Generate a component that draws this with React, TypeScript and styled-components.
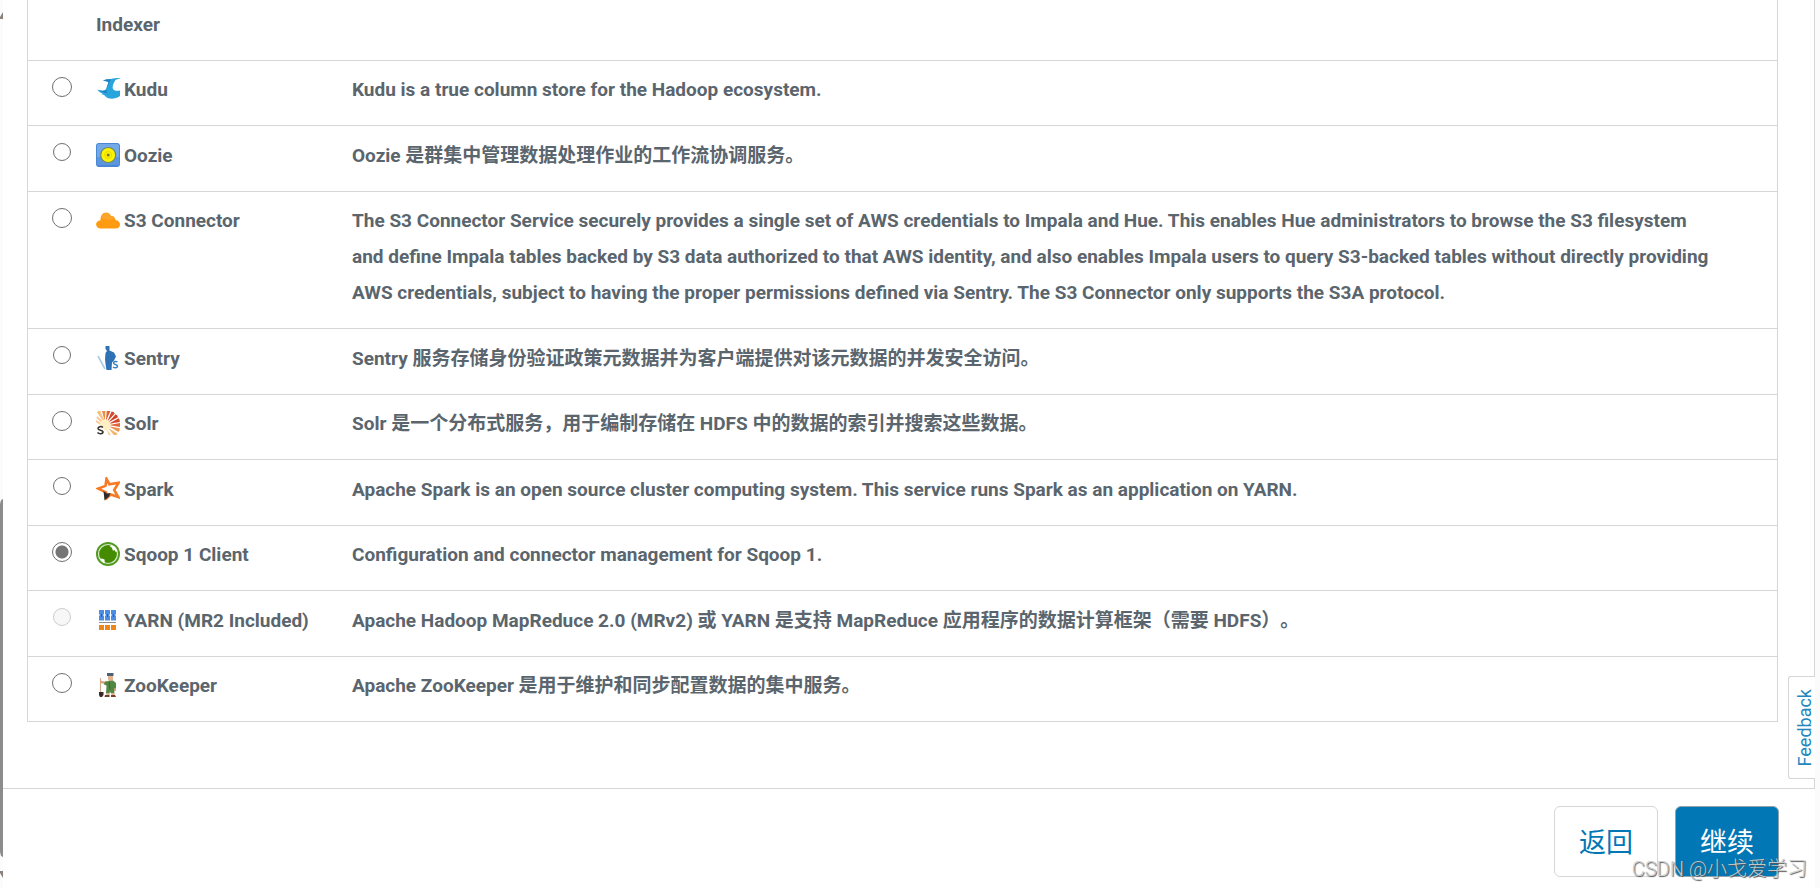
import React, { useState } from 'react';
import styled, { createGlobalStyle } from 'styled-components';

const BORDER = '#d4d6d9';
const BLUE = '#0277b5';

const GlobalStyle = createGlobalStyle`
  *, *::before, *::after { box-sizing: border-box; }
  body {
    margin: 0;
    background: #fff;
    color: #5a656d;
    font-family: Roboto, 'Noto Sans CJK SC', sans-serif;
    font-size: 19px;
    line-height: 36px;
    text-spacing-trim: space-all;
  }
`;

const Page = styled.div`
  display: grid;
  grid-template-columns: 3px 1fr 5px;
  min-height: 100vh;
  overflow: hidden;
`;

const Rail = styled.div`
  display: flex;
  flex-direction: column;
  justify-content: space-between;
  padding: 12px 0 10px;
  overflow: hidden;
  background: #fbfbfb;
`;

const RailThumb = styled.div`
  height: 358px;
  margin: auto 0 14px;
  border-radius: 3px 0 0 3px / 6px 0 0 6px;
  background: #8c8c8c;
`;

const RailArrow = styled.svg`
  display: block;
  width: 3px;
  height: 7px;
  fill: #8a807c;
`;

const Gutter = styled.div`
  background: #fbfbfb;
`;

const Main = styled.main`
  display: flex;
  flex-direction: column;
  min-width: 0;
`;

const Content = styled.section`
  position: relative;
  flex: 1;
  padding: 0 36px 66px 24px;
  border-right: 1px solid ${BORDER};
`;

const ServiceTable = styled.table`
  width: 100%;
  table-layout: fixed;
  border: 1px solid ${BORDER};
  border-top: 0;
  border-spacing: 0;
  font-weight: 700;
`;

const RadioCol = styled.col`
  width: 68px;
`;

const NameCol = styled.col`
  width: 256px;
`;

const Cell = styled.td`
  padding: 11px 0 17px;
  border-bottom: 1px solid ${BORDER};
  text-align: left;
  vertical-align: top;
`;

const DescriptionCell = styled(Cell)`
  padding-right: 60px;
`;

const Radio = styled.input`
  appearance: none;
  display: block;
  width: 20px;
  height: 20px;
  margin: 5px 0 0 24px;
  border: 1px solid #6f6f6f;
  border-radius: 50%;
  background: #fff;

  &:checked {
    background: radial-gradient(circle, #757575 0 6px, #fff 7px);
  }

  &:disabled {
    border-color: #cdcdcd;
    background: #f7f7f7;
  }
`;

const Row = styled.tr`
  &:first-child ${Cell} { padding-top: 7px; }
  &:not(:first-child):nth-child(odd) ${Cell} { padding-top: 12px; }
  &:nth-child(odd) ${Radio} { width: 18px; height: 18px; margin-left: 25px; }
  &:last-child ${Cell} { border-bottom: 0; }
`;

const ServiceLabel = styled.label`
  display: flex;
  align-items: flex-start;
  gap: 4px;
  white-space: nowrap;
`;

const ServiceIcon = styled.svg`
  flex: none;
  width: 24px;
  height: 24px;
  margin-top: 5px;
`;

const Feedback = styled.button`
  position: absolute;
  right: -1px;
  bottom: 9px;
  width: 27px;
  height: 103px;
  padding: 0 0 0 6px;
  border: 1px solid ${BORDER};
  border-right: 0;
  border-radius: 3px 0 0 3px;
  background: #fff;
  color: #2288bd;
  font: 400 18px/20px Roboto, sans-serif;
`;

const FeedbackText = styled.span`
  display: block;
  margin: auto;
  writing-mode: vertical-rl;
  transform: rotate(180deg);
`;

const Footer = styled.footer`
  position: relative;
  display: flex;
  justify-content: flex-end;
  gap: 17px;
  padding: 17px 36px 11px;
  border-top: 1px solid ${BORDER};
`;

const ActionButton = styled.button<{ $primary?: boolean }>`
  width: 104px;
  height: 71px;
  padding: 2px 0 0;
  border: 1px solid ${p => (p.$primary ? '#8fa3ad' : BORDER)};
  border-radius: 6px;
  background: ${p => (p.$primary ? BLUE : '#fff')};
  color: ${p => (p.$primary ? '#fff' : BLUE)};
  font: 400 27px/36px Roboto, 'Noto Sans CJK SC', sans-serif;
`;

const Watermark = styled.span`
  position: absolute;
  right: 8px;
  bottom: 4px;
  color: rgba(205, 205, 205, 0.95);
  font: 300 20px/30px Roboto, 'Noto Sans CJK SC', sans-serif;
  text-shadow: 1px 1px 1px #555;
  pointer-events: none;
`;

const KuduIcon = () => (
  <ServiceIcon viewBox="0 0 24 24" aria-hidden="true">
    <path d="M24 1c-4 0-7 .2-9 1-2 .3-5 0-8 1.500 2 .2 4 .8 5.500 1.500L10 12c-1.500 2-5 2-9 .5 2 2 3 3 5.500 4l-1 1c2 0 3 .5 4 2 4 3.500 10 2.500 14.500-.5v-5.500c-2 .5-6 .5-7-1.500-1-2.500 1-7 2.500-9 1-.8 3-1 4.500-1.500z" fill="#29a5de" />
    <path d="M15 2l-4 9c-.5 2-1 4 .5 6-1.500-1.500-6-2-9.500-3.500 4 .5 7 1 8.500-1l2-7.500L7 3.500C10 2 13 2.300 15 2z" fill="#2280bf" />
  </ServiceIcon>
);

const OozieIcon = () => (
  <ServiceIcon viewBox="0 0 24 24" aria-hidden="true">
    <rect width="24" height="24" rx="3" fill="#4b88d3" />
    <rect x="1" y="1" width="22" height="21" rx="2" fill="#73a9e8" />
    <path d="M1 14h22v6a2 2 0 0 1-2 2H3a2 2 0 0 1-2-2z" fill="#5c96df" />
    <circle cx="12.200" cy="12" r="7.500" fill="#fff200" stroke="#6b8a62" strokeWidth="1.200" />
    <circle cx="12.200" cy="12" r="3.500" fill="none" stroke="#e3d900" />
    <circle cx="12.200" cy="12" r="1.500" fill="#77772a" />
  </ServiceIcon>
);

const S3Icon = () => (
  <ServiceIcon viewBox="0 0 24 24" aria-hidden="true">
    <path d="M4 20.500A4 4 0 0 1 1.500 13.500c.8-.8 2-1 3-1.200C4.300 7.500 7 4.500 10 4.500c2.500 0 4.200 1.500 5 3.500 2.500-.5 4.300 1.300 4.500 4 2.500.3 4.500 2 4.500 4.500s-2 4-4 4z" fill="#ff9b12" />
    <path d="M5.500 10c.5-3.500 2.500-5 4.800-5 2 0 3.500 1 4.200 3.500 2 0 3.500.5 4 2.500-4 1-9 1-13-1z" fill="#fba52c" />
  </ServiceIcon>
);

const SentryIcon = () => (
  <ServiceIcon viewBox="0 0 24 24" aria-hidden="true">
    <path d="M2 10l7 13M16 10l-5 13" stroke="#a9cbe8" strokeWidth="1.600" fill="none" />
    <path d="M9.500 0h4v4.500l4.500 2 2 4-2 4-2 2-.5 7.500h-5L9.500 18 9 13l.5-6 1.500-2-1.500-2z" fill="#2e72b5" />
    <path d="M21.500 16c-1.300-1-4-.8-4 1 0 2 4 1 4 3.200 0 2-3 1.800-4.500.8" stroke="#3a80c1" strokeWidth="1.500" fill="none" />
  </ServiceIcon>
);

const RAYS = [-115, -95, -76, -57, -38, -19, 0, 20, 42, 65];
const RAY_COLORS = ['#f3bd7b', '#e88f45', '#dc6333', '#d2492b', '#cf4229', '#d3482b', '#df6739', '#ed9350', '#f4b56e', '#f8d69c'];

const SolrIcon = () => (
  <ServiceIcon viewBox="0 0 24 24" aria-hidden="true">
    <defs>
      <radialGradient id="solr" cx="9" cy="15" r="15" gradientUnits="userSpaceOnUse">
        <stop offset="0.500" stopColor="#fff0c4" />
        <stop offset="1" stopColor="#fdeedd" stopOpacity="0.500" />
      </radialGradient>
    </defs>
    <path d="M0 13C0 6 5 0 12 0s12 5 12 12-5 12-12 12H9z" fill="url(#solr)" />
    {RAYS.map((angle, i) => (
      <path key={angle} d="M4 0L15-1.900l.5 1.900L15 1.900z" fill={RAY_COLORS[i]} transform={`translate(9 14) rotate(${angle})`} />
    ))}
    <path d="M0 10l6 4M1 6l6 6M4 2l4 8" stroke="#f8c791" strokeWidth="1.800" />
    <circle cx="9" cy="14" r="5.500" fill="#fff0c4" />
    <path d="M0 15h8v9H0z" fill="#fff" fillOpacity="0.600" />
    <path d="M7 16.500c-1.500-1.500-5-1-5 1 0 2.300 5 1 5 3.500 0 2-4 2.200-5.500.5" stroke="#333" strokeWidth="1.500" fill="none" />
  </ServiceIcon>
);

const SparkIcon = () => (
  <ServiceIcon viewBox="0 0 24 24" aria-hidden="true">
    <path d="M10.500 1.800l2.800 5.400 9.300-1.500-4.400 7.300 4 7-7.400-2.500-4 3.500-.8-5.700-8-3.700 7.500-2.700z" fill="#fff" stroke="#f97a25" strokeWidth="2.600" strokeLinejoin="miter" />
    <path d="M7.500 14l3.500 2.500 3.500-.5-1.500 3.500L8.500 23.500z" fill="#2d2b2b" />
  </ServiceIcon>
);

const SqoopIcon = () => (
  <ServiceIcon viewBox="0 0 24 24" aria-hidden="true">
    <circle cx="12" cy="12" r="12" fill="#519b20" />
    <circle cx="12" cy="12" r="9.500" fill="#458b00" stroke="#d9ebcd" strokeWidth="1.200" />
    <path d="M14 4.500l1-1.700 4 2.200 2.500 4-1.700 1.200-1-2-2 .2-.7-2.400z" fill="#fff" />
    <path d="M4 17l2-.5 2.500 1 .3 3-1 .8z" fill="#fff" />
  </ServiceIcon>
);

const YarnIcon = () => (
  <ServiceIcon viewBox="0 0 24 24" aria-hidden="true">
    {[3, 9, 15].map(x => (
      <g key={x}>
        <path d={`M${x} 2h5v4.500h-1v1h1v5h-5v-5h1v-1h-1z`} fill="#4b8de5" />
        <path d={`M${x + 2} 6h1v3h-1z`} fill="#285fa9" />
        <rect x={x} y="17" width="5" height="5" fill="#ee861c" />
      </g>
    ))}
    <path d="M3 14h17v1H3z" fill="#8f8f8f" />
  </ServiceIcon>
);

const ZooKeeperIcon = () => (
  <ServiceIcon viewBox="0 0 24 24" aria-hidden="true">
    <path d="M4.500 5v15" stroke="#d0ab91" strokeWidth="1.200" />
    <path d="M3 19h4.500v3L6 24H4l-1-2z" fill="#3b2928" />
    <path d="M12 2h5v5l-1 1h-3l-1-1z" fill="#e4b28d" />
    <path d="M11 0h6.500v3H11z" fill="#4c6076" />
    <path d="M4 7.500l7 1.500v2.500L4 10zM17 14h3v4h-2z" fill="#d9a580" />
    <path d="M9 8.500l8-1 3 2.500v5l-2 .5.5 5H15l-1-2-.5 2H10l.5-8-2.500-1z" fill="#538843" />
    <path d="M13 9l1 7" stroke="#35662d" />
    <path d="M10.500 20h3v2h-3zM15.500 20h3v2h-3z" fill="#ddb08c" />
    <path d="M9 22h4.500v2H8.500zM15 22h4l1 2h-5z" fill="#754023" />
  </ServiceIcon>
);

interface Service {
  id: string;
  name: string;
  description: string;
  Icon: React.ComponentType;
  disabled?: boolean;
}

const SERVICES: Service[] = [
  { id: 'kudu', name: 'Kudu', Icon: KuduIcon, description: 'Kudu is a true column store for the Hadoop ecosystem.' },
  { id: 'oozie', name: 'Oozie', Icon: OozieIcon, description: 'Oozie 是群集中管理数据处理作业的工作流协调服务。' },
  {
    id: 's3',
    name: 'S3 Connector',
    Icon: S3Icon,
    description:
      'The S3 Connector Service securely provides a single set of AWS credentials to Impala and Hue. This enables Hue administrators to browse the S3 filesystem and define Impala tables backed by S3 data authorized to that AWS identity, and also enables Impala users to query S3-backed tables without directly providing AWS credentials, subject to having the proper permissions defined via Sentry. The S3 Connector only supports the S3A protocol.',
  },
  { id: 'sentry', name: 'Sentry', Icon: SentryIcon, description: 'Sentry 服务存储身份验证政策元数据并为客户端提供对该元数据的并发安全访问。' },
  { id: 'solr', name: 'Solr', Icon: SolrIcon, description: 'Solr 是一个分布式服务，用于编制存储在 HDFS 中的数据的索引并搜索这些数据。' },
  { id: 'spark', name: 'Spark', Icon: SparkIcon, description: 'Apache Spark is an open source cluster computing system. This service runs Spark as an application on YARN.' },
  { id: 'sqoop', name: 'Sqoop 1 Client', Icon: SqoopIcon, description: 'Configuration and connector management for Sqoop 1.' },
  { id: 'yarn', name: 'YARN (MR2 Included)', Icon: YarnIcon, disabled: true, description: 'Apache Hadoop MapReduce 2.0 (MRv2) 或 YARN 是支持 MapReduce 应用程序的数据计算框架（需要 HDFS）。' },
  { id: 'zookeeper', name: 'ZooKeeper', Icon: ZooKeeperIcon, description: 'Apache ZooKeeper 是用于维护和同步配置数据的集中服务。' },
];

export default function App() {
  const [selected, setSelected] = useState('sqoop');

  return (
    <Page>
      <GlobalStyle />
      <Rail>
        <RailArrow viewBox="0 0 3 7" aria-hidden="true"><path d="M3 0v7H0V5z" /></RailArrow>
        <RailThumb />
        <RailArrow viewBox="0 0 3 7" aria-hidden="true"><path d="M0 0h3v7L0 2z" /></RailArrow>
      </Rail>
      <Main>
        <Content>
          <ServiceTable>
            <colgroup>
              <RadioCol />
              <NameCol />
              <col />
            </colgroup>
            <tbody>
              <Row>
                <Cell />
                <Cell>Indexer</Cell>
                <DescriptionCell />
              </Row>
              {SERVICES.map(({ id, name, description, Icon, disabled }) => (
                <Row key={id}>
                  <Cell>
                    <Radio
                      type="radio"
                      name="service"
                      id={id}
                      disabled={disabled}
                      checked={selected === id}
                      onChange={() => setSelected(id)}
                    />
                  </Cell>
                  <Cell>
                    <ServiceLabel htmlFor={id}>
                      <Icon />
                      {name}
                    </ServiceLabel>
                  </Cell>
                  <DescriptionCell>{description}</DescriptionCell>
                </Row>
              ))}
            </tbody>
          </ServiceTable>
          <Feedback type="button">
            <FeedbackText>Feedback</FeedbackText>
          </Feedback>
        </Content>
        <Footer>
          <ActionButton type="button">返回</ActionButton>
          <ActionButton type="button" $primary>继续</ActionButton>
          <Watermark>CSDN @小戈爱学习</Watermark>
        </Footer>
      </Main>
      <Gutter />
    </Page>
  );
}
